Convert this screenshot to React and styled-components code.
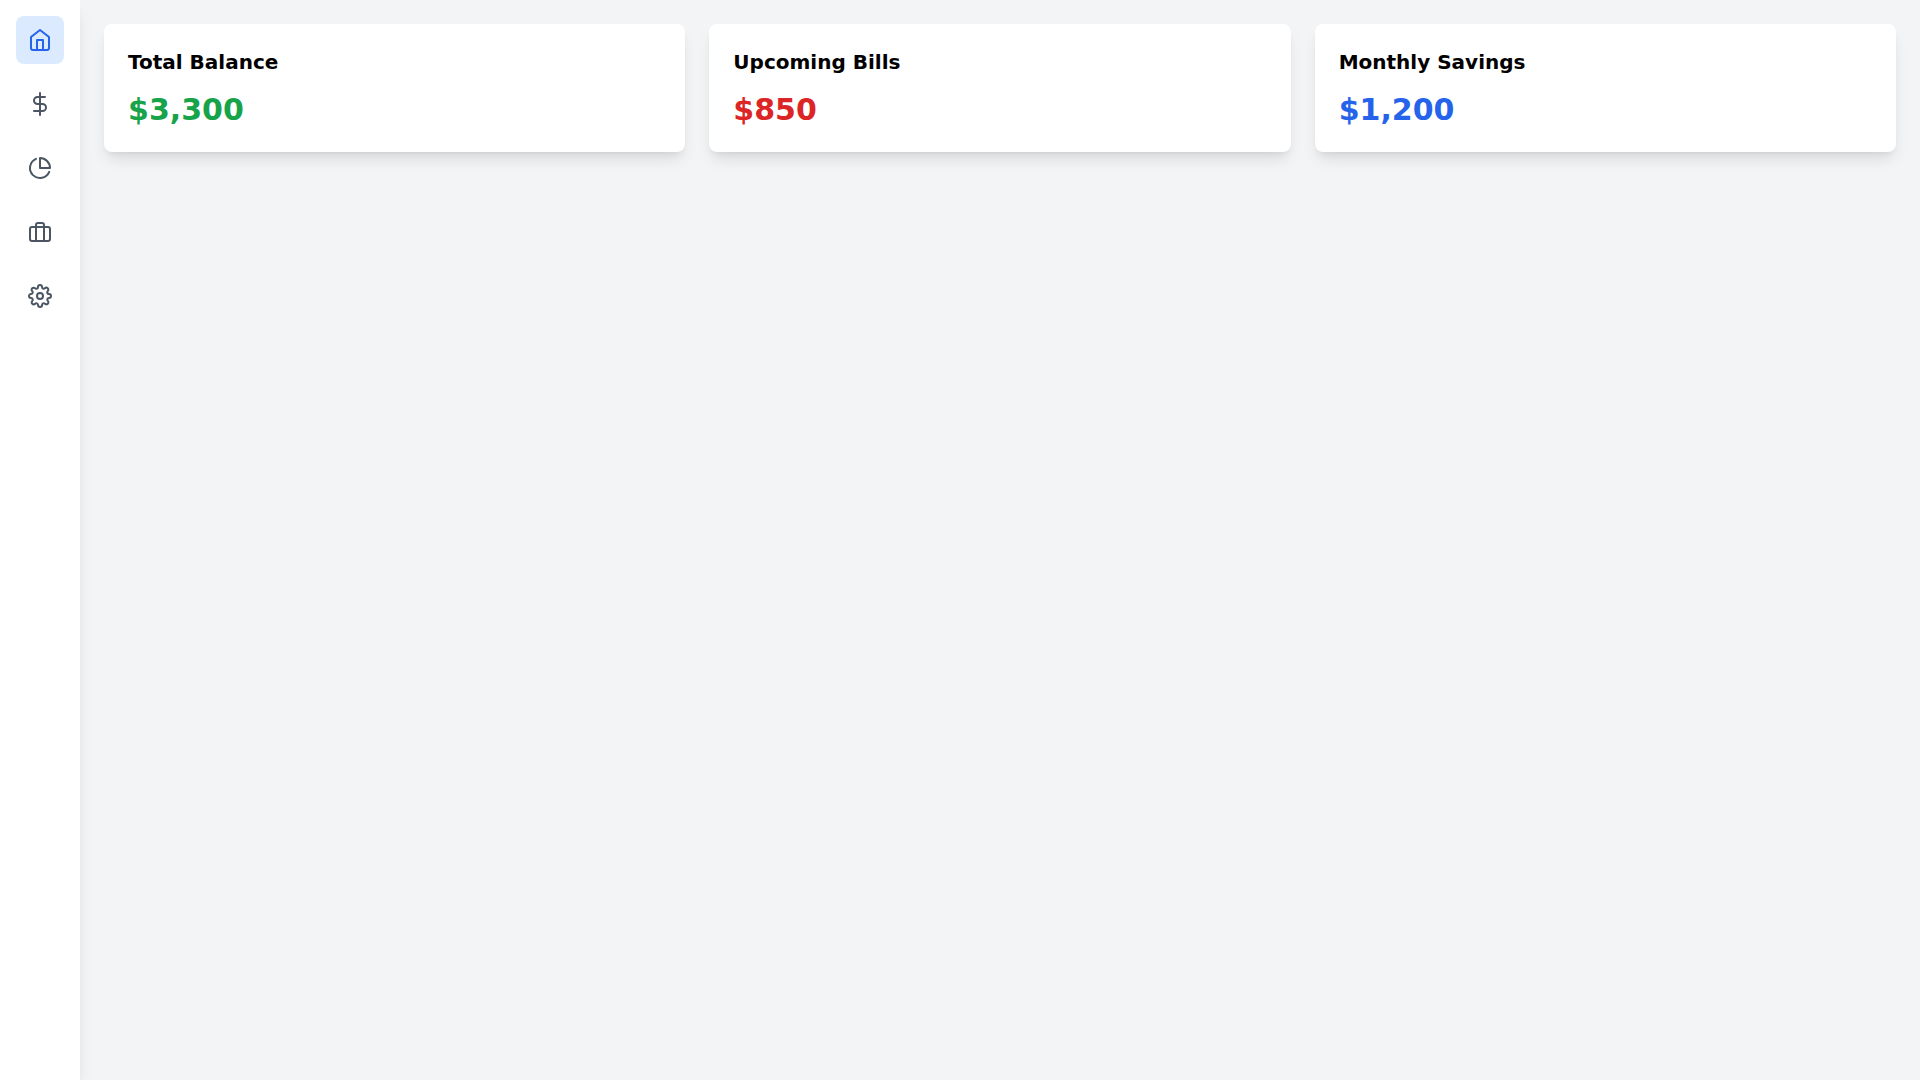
import React, { useState } from 'react';
import styled, { createGlobalStyle } from 'styled-components';
import {
  FiHome,
  FiDollarSign,
  FiPieChart,
  FiBriefcase,
  FiSettings
} from 'react-icons/fi';

const GlobalStyle = createGlobalStyle`
  *, *::before, *::after {
    box-sizing: border-box;
  }

  body {
    margin: 0;
    background: #f3f4f6;
    font-family: "DejaVu Sans", sans-serif;
  }
`;

const shadow = '0 10px 15px -3px rgba(0, 0, 0, 0.1), 0 4px 6px -4px rgba(0, 0, 0, 0.1)';

const Layout = styled.div`
  display: flex;
  min-height: 100vh;
`;

const Sidebar = styled.nav`
  display: flex;
  flex-direction: column;
  align-items: center;
  gap: 16px;
  flex-shrink: 0;
  width: 80px;
  padding: 16px 0;
  background: #fff;
  box-shadow: ${shadow};
`;

const NavButton = styled.button`
  display: flex;
  padding: 12px;
  border: 0;
  border-radius: 8px;
  cursor: pointer;
  color: ${props => props.$active ? '#2563eb' : '#4b5563'};
  background: ${props => props.$active ? '#dbeafe' : 'transparent'};

  &:hover {
    background: ${props => props.$active ? '#dbeafe' : '#f3f4f6'};
  }
`;

const Content = styled.main`
  flex: 1;
  padding: 24px;
`;

const CardGrid = styled.div`
  display: grid;
  grid-template-columns: repeat(3, minmax(0, 1fr));
  gap: 24px;
`;

const Card = styled.section`
  padding: 24px;
  border-radius: 8px;
  background: #fff;
  box-shadow: ${shadow};
`;

const CardTitle = styled.h2`
  margin: 0 0 16px;
  font-size: 20px;
  line-height: 28px;
  font-weight: 600;
  color: #000;
`;

const Amount = styled.p`
  margin: 0;
  font-size: 30px;
  line-height: 36px;
  font-weight: 700;
  color: ${props => props.$color};
`;

const navItems = [
  { id: 'dashboard', label: 'Dashboard', Icon: FiHome },
  { id: 'transactions', label: 'Transactions', Icon: FiDollarSign },
  { id: 'budget', label: 'Budget', Icon: FiPieChart },
  { id: 'investments', label: 'Investments', Icon: FiBriefcase },
  { id: 'settings', label: 'Settings', Icon: FiSettings }
];

const summary = [
  { title: 'Total Balance', amount: 3300, color: '#16a34a' },
  { title: 'Upcoming Bills', amount: 850, color: '#dc2626' },
  { title: 'Monthly Savings', amount: 1200, color: '#2563eb' }
];

function App() {
  const [active, setActive] = useState('dashboard');

  return (
    <>
      <GlobalStyle />
      <Layout>
        <Sidebar>
          {navItems.map(({ id, label, Icon }) => (
            <NavButton
              key={id}
              type="button"
              aria-label={label}
              $active={active === id}
              onClick={() => setActive(id)}
            >
              <Icon size={24} />
            </NavButton>
          ))}
        </Sidebar>
        <Content>
          <CardGrid>
            {summary.map(({ title, amount, color }) => (
              <Card key={title}>
                <CardTitle>{title}</CardTitle>
                <Amount $color={color}>${amount.toLocaleString('en-US')}</Amount>
              </Card>
            ))}
          </CardGrid>
        </Content>
      </Layout>
    </>
  );
}

export default App;
